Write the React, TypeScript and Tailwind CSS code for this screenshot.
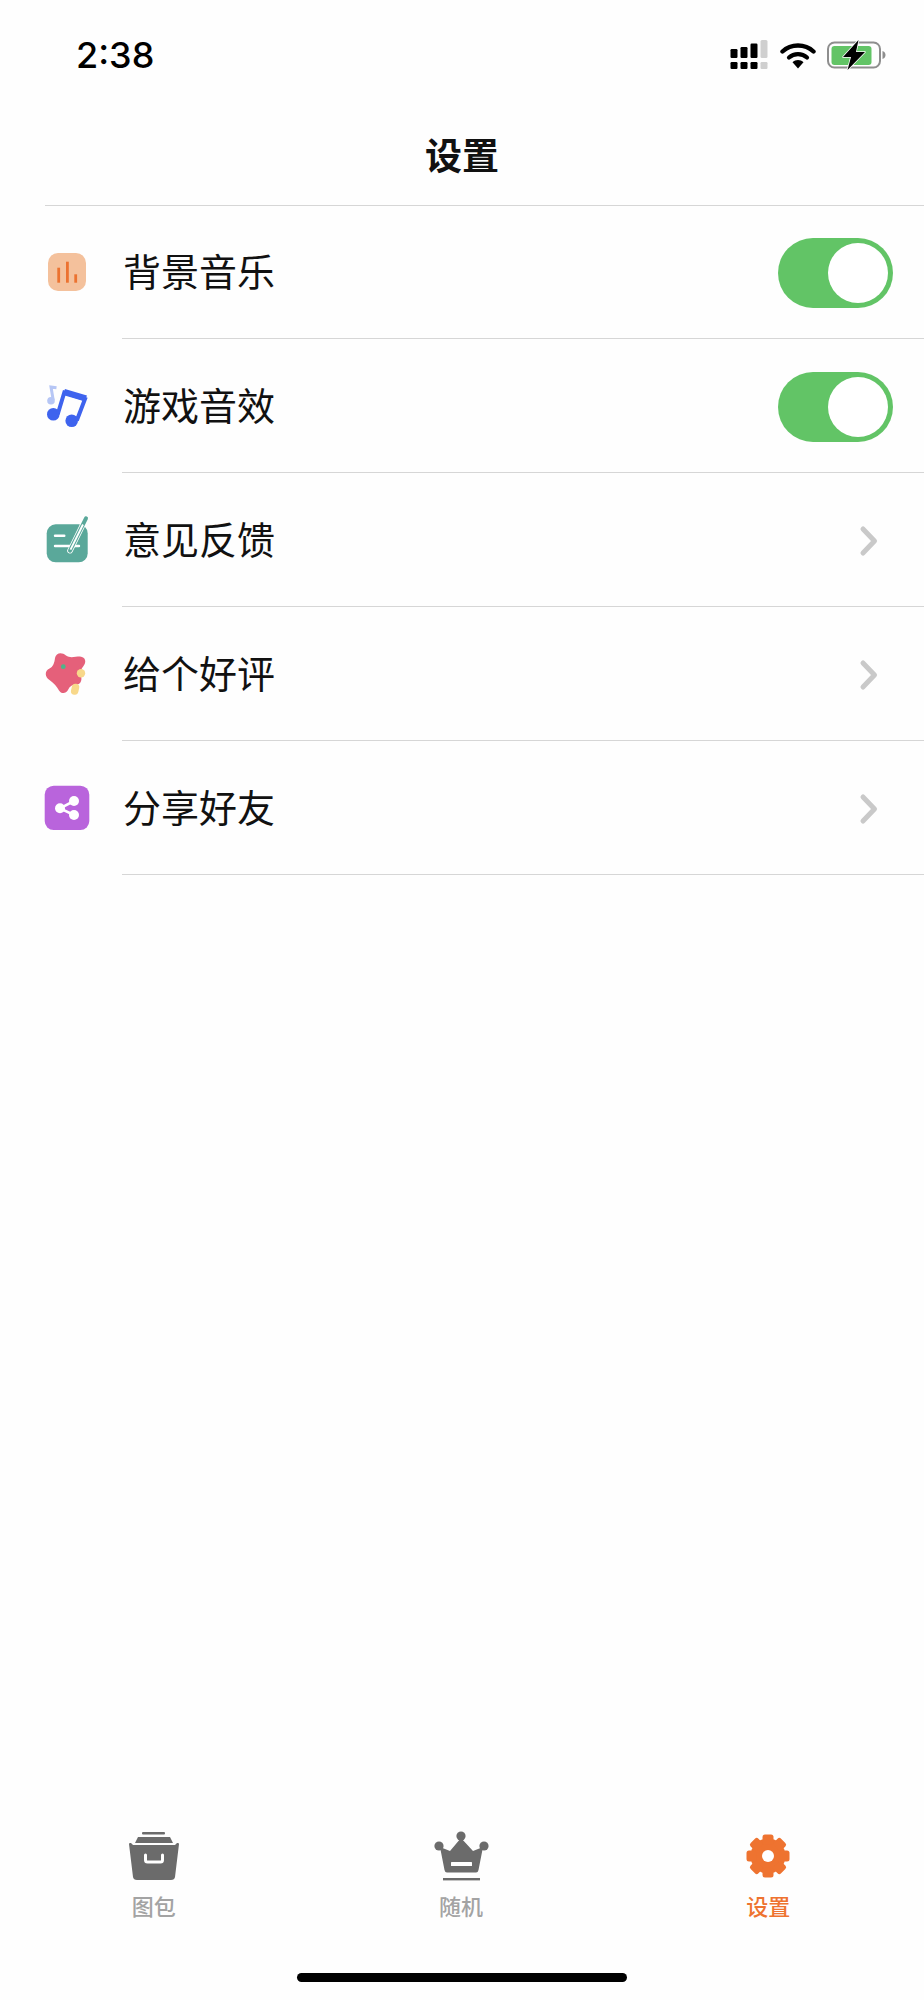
import type { ReactNode } from 'react'

const cjk = "font-['PingFang_SC','Liberation_Sans','Noto_Sans_CJK_SC',sans-serif]"

function Toggle() {
  return (
    <div className="flex items-center justify-end w-[115px] h-[70px] pr-[5px] rounded-full bg-[#62c466]">
      <div className="w-[60px] h-[60px] rounded-full bg-white" />
    </div>
  )
}

function Chevron() {
  return (
    <svg width="20" height="32" viewBox="0 0 20 32" className="mr-[14px]">
      <path d="M4 4 L15.5 16 L4 28" fill="none" stroke="#c9c9c9" strokeWidth="5" strokeLinecap="round" strokeLinejoin="round" />
    </svg>
  )
}

const icons: Record<string, ReactNode> = {
  music: (
    <>
      <rect x="6" y="6" width="38" height="38" rx="10" fill="#f4c19c" />
      <rect x="15.3" y="20.7" width="2.8" height="15" fill="#ec7230" />
      <rect x="24" y="14.7" width="2.8" height="21" fill="#ec7230" />
      <rect x="32.3" y="27.3" width="2.8" height="8.4" fill="#ec7230" />
    </>
  ),
  sound: (
    <>
      <circle cx="9" cy="19.7" r="3.8" fill="#b6c6f5" />
      <path d="M11.2 19 L9 6 L14.5 6.8" fill="none" stroke="#b6c6f5" strokeWidth="3" />
      <circle cx="11.3" cy="33.3" r="6.3" fill="#3e63ee" />
      <circle cx="29.7" cy="39.7" r="6.3" fill="#3e63ee" />
      <path d="M15.8 33 L22.3 11.5 L43 18 L34.8 39.5" fill="none" stroke="#3e63ee" strokeWidth="4" />
      <path d="M22 11 L44 17.5" fill="none" stroke="#3e63ee" strokeWidth="6.5" />
    </>
  ),
  feedback: (
    <>
      <rect x="4.7" y="9.3" width="41" height="38" rx="9" fill="#5aa89a" />
      <path d="M13 20.7 H22.3 M13 31 H37" stroke="#fff" strokeWidth="2.4" strokeLinecap="round" />
      <path d="M28 35.7 L44 3.3" stroke="#fff" strokeWidth="5.6" strokeLinecap="round" />
      <path d="M28 35.7 L44 3.3" stroke="#5aa89a" strokeWidth="4" strokeLinecap="round" />
      <path d="M28.5 34.7 L41 9.5" stroke="#fff" strokeWidth="1.8" />
    </>
  ),
  rate: (
    <>
      <path
        d="M13 9 C14 3.5 20 3 24 6.5 C28 9.5 33 7.5 38 7.5 C44 8 44.5 13.5 41.5 17 C39 20 38 23 39 27 C40.5 32 38 36 33 36 C29 36 27.5 38 26 41 C24 45 19 45 17 41.5 C15 38 12 34 7.5 31 C2.5 28 2.5 21.5 7.5 19.5 C11 18 12.5 14 13 9 Z"
        fill="#e5607a"
      />
      <circle cx="21.3" cy="17.7" r="2.4" fill="#4eb58a" />
      <circle cx="39" cy="24.3" r="4.2" fill="#f8d88a" />
      <path d="M33.5 38.5 L32.7 42" stroke="#f8d88a" strokeWidth="7.5" strokeLinecap="round" />
    </>
  ),
  share: (
    <>
      <rect x="2.7" y="2.7" width="44.6" height="44.4" rx="9" fill="#b964dc" />
      <path d="M18 25.3 L32 18 M18 25.3 L32 32" stroke="#fff" strokeWidth="2.6" />
      <circle cx="18" cy="25.3" r="5" fill="#fff" />
      <circle cx="32" cy="18" r="5" fill="#fff" />
      <circle cx="32" cy="32" r="5" fill="#fff" />
    </>
  ),
}

const rows = [
  { icon: 'music', label: '背景音乐', toggle: true },
  { icon: 'sound', label: '游戏音效', toggle: true },
  { icon: 'feedback', label: '意见反馈', toggle: false },
  { icon: 'rate', label: '给个好评', toggle: false },
  { icon: 'share', label: '分享好友', toggle: false },
]

function Row({ icon, label, toggle }: { icon: string; label: string; toggle: boolean }) {
  return (
    <div className="flex items-center pl-[42px]">
      <svg width="50" height="50" viewBox="0 0 50 50" className="mr-[30px] shrink-0">
        {icons[icon]}
      </svg>
      <div className="flex flex-1 items-center justify-between h-[134px] pt-[2px] pr-[31px] border-b-[1.5px] border-[#d6d6d6]">
        <span className="mt-[2px] pl-[1px] text-[38px] text-[#111]">{label}</span>
        {toggle ? <Toggle /> : <Chevron />}
      </div>
    </div>
  )
}

function StatusIcons() {
  return (
    <div className="flex items-center">
      <svg width="38" height="30" viewBox="0 0 38 30" className="mr-[12px]">
        <g fill="#000">
          <rect x="0.5" y="9" width="7" height="9" rx="1.2" />
          <rect x="10.5" y="7" width="7" height="11" rx="1.2" />
          <rect x="20.5" y="3.5" width="7" height="14.5" rx="1.2" />
          <rect x="0.5" y="22" width="7" height="7" rx="1.2" />
          <rect x="10.5" y="22" width="7" height="7" rx="1.2" />
          <rect x="20.5" y="22" width="7" height="7" rx="1.2" />
        </g>
        <rect x="30.5" y="0" width="7" height="18" rx="1.5" fill="#cfcfcf" />
        <rect x="30.5" y="22" width="7" height="7" rx="1.2" fill="#cfcfcf" />
      </svg>
      <svg width="36" height="27" viewBox="0 0 36 27" className="mr-[11px]">
        <path d="M2.5 9.5 C11 1.5 25 1.5 33.5 9.5" fill="none" stroke="#000" strokeWidth="4.4" strokeLinecap="round" />
        <path d="M9 15.5 C14 11 22 11 27 15.5" fill="none" stroke="#000" strokeWidth="4.2" strokeLinecap="round" />
        <path d="M12.5 20.2 C15.5 17.2 20.5 17.2 23.5 20.2 L18 26.5 Z" fill="#000" />
      </svg>
      <svg width="60" height="30" viewBox="0 0 60 30">
        <rect x="1" y="2.5" width="52" height="25" rx="6.5" fill="none" stroke="#8e8e8e" strokeWidth="2" />
        <rect x="4.5" y="6" width="40" height="19" rx="3" fill="#62c466" />
        <path d="M55.5 11 C58 12 58.5 13.5 58.5 15 C58.5 16.5 58 18 55.5 19 Z" fill="#8e8e8e" />
        <path d="M31.5 0 L16 17 H24 L20.5 30 L38 12 H29 Z" fill="#000" stroke="#fff" strokeWidth="1.5" strokeLinejoin="round" paintOrder="stroke" />
      </svg>
    </div>
  )
}

function BoxIcon() {
  return (
    <svg width="60" height="60" viewBox="0 0 60 60">
      <rect x="18" y="3" width="23" height="2.6" rx="1" fill="#6b6b6b" />
      <path d="M14 8 H46 L49 14 H11 Z" fill="#6b6b6b" />
      <path d="M5 15 Q5 13.5 7 14 L9 16 H51 L53 14 Q55 13.5 55 15 L51 48 Q50.5 51 47 51 H13 Q9.5 51 9 48 Z" fill="#6b6b6b" />
      <path d="M21.5 26 V31 Q21.5 33 23.5 33 H36.5 Q38.5 33 38.5 31 V26" fill="none" stroke="#fff" strokeWidth="3" strokeLinecap="round" />
    </svg>
  )
}

function CrownIcon() {
  return (
    <svg width="60" height="60" viewBox="0 0 60 60">
      <circle cx="8" cy="17" r="4.6" fill="#6b6b6b" />
      <circle cx="30" cy="7" r="4.6" fill="#6b6b6b" />
      <circle cx="53" cy="17" r="4.6" fill="#6b6b6b" />
      <path d="M9 18 L19 22 L30 9 L42 22 L52 18 L47.5 41 Q47 43.5 45 43.5 H16 Q14 43.5 13.5 41 Z" fill="#6b6b6b" />
      <rect x="20" y="33" width="21" height="4" rx="0.5" fill="#fff" />
      <rect x="12" y="49" width="37" height="2.4" fill="#6b6b6b" />
    </svg>
  )
}

function GearIcon() {
  const angles = [0, 45, 90, 135, 180, 225, 270, 315]
  return (
    <svg width="60" height="60" viewBox="0 0 60 60">
      <circle cx="30" cy="27" r="17.5" fill="#ee7330" />
      {angles.map((a) => (
        <rect key={a} x="24.5" y="5.5" width="11" height="10" rx="2.5" fill="#ee7330" transform={`rotate(${a} 30 27)`} />
      ))}
      <circle cx="30" cy="27" r="6" fill="#fff" />
    </svg>
  )
}

function Tab({ label, active, children }: { label: string; active?: boolean; children: ReactNode }) {
  return (
    <div className="flex flex-col items-center">
      {children}
      <span className={`mt-[4px] text-[22px] leading-[30px] font-medium ${active ? 'text-[#ee7330]' : 'text-[#a3a3a3]'}`}>{label}</span>
    </div>
  )
}

export default function App() {
  return (
    <div className={`flex flex-col h-[2000px] bg-[#fefefe] ${cjk}`}>
      <div className="flex items-center justify-between h-[110px] pl-[76px] pr-[37px]">
        <span className="text-[36px] font-medium text-black font-['Inter',sans-serif]">2:38</span>
        <StatusIcons />
      </div>

      <div className="flex items-center justify-center h-[96px] ml-[45px] border-b-[1.5px] border-[#d6d6d6]">
        <h1 className="-ml-[45px] text-[37px] font-bold text-[#111]">设置</h1>
      </div>

      <div className="flex-1 -mt-[1px]">
        {rows.map((r) => (
          <Row key={r.label} {...r} />
        ))}
      </div>

      <div className="grid grid-cols-3 pb-[50px] pr-[2px]">
        <Tab label="图包">
          <BoxIcon />
        </Tab>
        <Tab label="随机">
          <CrownIcon />
        </Tab>
        <Tab label="设置" active>
          <GearIcon />
        </Tab>
      </div>

      <div className="flex justify-center pb-[18px]">
        <div className="w-[330px] h-[9px] rounded-full bg-black" />
      </div>
    </div>
  )
}
